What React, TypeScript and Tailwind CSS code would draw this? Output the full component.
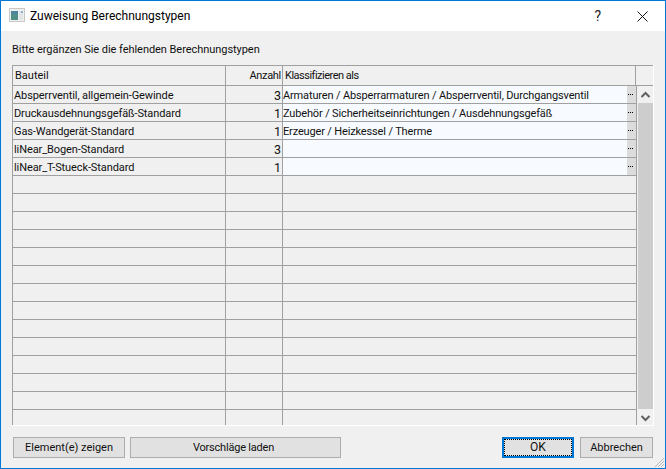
const rows = [
  { name: "Absperrventil, allgemein-Gewinde", count: "3", type: "Armaturen / Absperrarmaturen / Absperrventil, Durchgangsventil" },
  { name: "Druckausdehnungsgefäß-Standard", count: "1", type: "Zubehör / Sicherheitseinrichtungen / Ausdehnungsgefäß" },
  { name: "Gas-Wandgerät-Standard", count: "1", type: "Erzeuger / Heizkessel / Therme" },
  { name: "liNear_Bogen-Standard", count: "3", type: "" },
  { name: "liNear_T-Stueck-Standard", count: "1", type: "" },
]

function Row({ name, count, type, edit }: { name?: string; count?: string; type?: string; edit?: boolean }) {
  return (
    <div className="flex h-[18px] shrink-0 border-b border-[#a0a0a0] text-[11px]">
      <div className="w-[213px] shrink-0 border-r border-[#a0a0a0] pl-[1px] leading-[19px] tracking-[-0.1px] whitespace-nowrap">{name}</div>
      <div className="w-[57px] shrink-0 border-r border-[#a0a0a0] pr-[1px] text-right text-[12.5px] leading-[19px]">{count}</div>
      {edit ? (
        <div className="flex flex-1 bg-[#f7fbff]">
          <div className="flex-1 leading-[19px] tracking-[-0.15px] whitespace-nowrap overflow-hidden">{type}</div>
          <div className="flex w-[9px] items-center gap-[1px] bg-[#dcdcdc] pl-[1px]">
            <span className="size-[1px] bg-black" />
            <span className="size-[1px] bg-black" />
            <span className="size-[1px] bg-black" />
          </div>
        </div>
      ) : (
        <div className="flex-1" />
      )}
    </div>
  )
}

export default function App() {
  return (
    <div className="relative flex h-[469px] w-[666px] flex-col overflow-hidden border border-[#0078d7] bg-[#f0f0f0] font-['Roboto','Liberation_Sans',sans-serif] text-[11px] text-[#111]">
      {/* Title bar */}
      <div className="flex h-[30px] shrink-0 items-center bg-white">
        <svg width="16" height="14" viewBox="0 0 16 14" className="mb-[2px] ml-[8px]">
          <rect x="0.5" y="0.5" width="15" height="13" fill="#efefef" stroke="#c8c8c8" />
          <rect x="2" y="3" width="7" height="9" fill="#4f8f88" />
          <rect x="2" y="3" width="7" height="3" fill="#4a86a0" />
          <rect x="10" y="3" width="4" height="9" fill="#e2e5e8" />
          <rect x="12" y="3" width="2" height="2" fill="#8fb3cf" />
        </svg>
        <span className="ml-[5px] text-[12px] text-black">Zuweisung Berechnungstypen</span>
        <span className="ml-auto mr-[36px] text-[14px] leading-none text-[#222]">?</span>
        <svg width="11" height="11" viewBox="0 0 11 11" className="mr-[17px]">
          <path d="M.5.5l10 10M10.5.5l-10 10" fill="none" stroke="#111" strokeWidth="1" />
        </svg>
      </div>

      {/* Content */}
      <div className="flex flex-1 flex-col px-[11px]">
        <div className="mt-[12px] h-[14px] leading-[14px] tracking-[-0.05px]">Bitte ergänzen Sie die fehlenden Berechnungstypen</div>
        <div className="mt-[8px] h-[361px] w-[642px] border-r border-b border-white">
          <div className="h-full border-l border-t border-[#a0a0a0] overflow-hidden">
            {/* Header */}
            <div className="flex h-[20px] border-b border-[#a0a0a0]">
              <div className="w-[213px] shrink-0 border-r border-[#a0a0a0] pl-[2px] leading-[20px]">Bauteil</div>
              <div className="w-[57px] shrink-0 border-r border-[#a0a0a0] pr-[1px] text-right leading-[20px] tracking-[-0.3px]">Anzahl</div>
              <div className="flex-1 border-r border-[#a0a0a0] pl-[2px] leading-[20px] tracking-[-0.5px]">Klassifizieren als</div>
              <div className="w-[17px] shrink-0" />
            </div>
            <div className="flex h-[340px]">
              <div className="flex w-[624px] shrink-0 flex-col overflow-hidden border-r border-[#a0a0a0]">
                {rows.map((r) => (
                  <Row key={r.name} {...r} edit />
                ))}
                {Array.from({ length: 14 }).map((_, i) => (
                  <Row key={i} />
                ))}
              </div>
              {/* Scrollbar */}
              <div className="flex w-[17px] shrink-0 flex-col items-center bg-[#f0f0f0]">
                <svg width="17" height="17" viewBox="0 0 17 17" className="shrink-0">
                  <path d="M4.5 11 8.5 7l4 4" fill="none" stroke="#606060" strokeWidth="2" />
                </svg>
                <div className="w-[15px] flex-1 bg-[#cdcdcd]" />
                <svg width="17" height="17" viewBox="0 0 17 17" className="shrink-0">
                  <path d="M4.5 7l4 4 4-4" fill="none" stroke="#606060" strokeWidth="2" />
                </svg>
              </div>
            </div>
          </div>
        </div>

        {/* Buttons */}
        <div className="mt-[11px] flex items-start">
          <button className="ml-[1px] h-[21px] w-[112px] border border-[#adadad] bg-[#e1e1e1] leading-[18px]">Element(e) zeigen</button>
          <button className="ml-[5px] h-[21px] w-[211px] border border-[#adadad] bg-[#e1e1e1] pr-[4px] leading-[18px] tracking-[-0.2px]">Vorschläge laden</button>
          <button className="ml-[161px] h-[21px] w-[72px] border-2 border-[#0078d7] bg-[#e1e1e1] text-[12px] leading-[15px] outline-1 -outline-offset-3 outline-dotted outline-black">OK</button>
          <button className="ml-[6px] h-[21px] w-[73px] border border-[#adadad] bg-[#e1e1e1] leading-[18px]">Abbrechen</button>
        </div>
      </div>

      {/* Size grip */}
      <svg width="12" height="12" viewBox="0 0 12 12" className="absolute bottom-0 right-0">
        <path d="M11 2 2 11M11 5 5 11M11 8 8 11" stroke="#b8b8b8" strokeWidth="1" />
      </svg>
    </div>
  )
}
